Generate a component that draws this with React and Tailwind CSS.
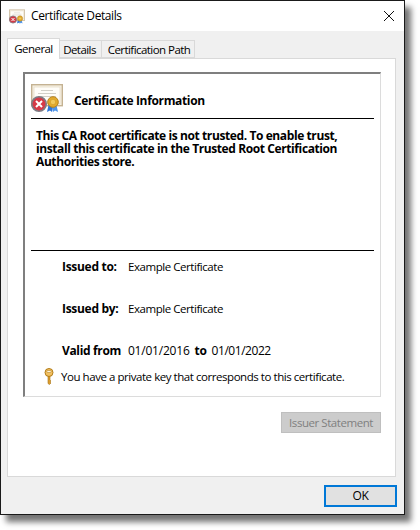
const CertIcon = ({ className }) => (
  <svg className={className} viewBox="0 0 32 28">
    <rect x="0.7" y="0.7" width="30.6" height="21" fill="#f7f1e3" stroke="#c4b292" strokeWidth="1.4" />
    <rect x="3" y="3" width="26" height="16.5" fill="#fffdf8" stroke="#e6dcc8" strokeWidth="0.8" />
    <path d="M10 6.5h12M7 9.5h18M7 12.5h18" stroke="#c8c4bb" strokeWidth="0.8" />
    <path d="M17.500 21l-1.500 7 3-1.500 2 1.500 1.500-7z" fill="#2f75d6" />
    <path d="M21 21l1 7 2-1.500 3 1.500-1.500-7z" fill="#4f95ea" />
    <circle cx="22" cy="18" r="5.300" fill="#e3aa2d" stroke="#b8841c" />
    <circle cx="22" cy="18" r="2.700" fill="#f2c95a" stroke="#c9941f" strokeWidth="0.5" />
    <circle cx="8" cy="20" r="7.200" fill="#d63a46" stroke="#7c7c84" strokeWidth="1.600" />
    <path d="M5 17l6 6M11 17l-6 6" stroke="#fff" strokeWidth="2" />
  </svg>
);

const KeyIcon = () => (
  <svg width="10" height="17" viewBox="0 0 10 17">
    <path d="M4 8v7.500l1.500 1 1.500-1.500-1-1 1-1-1-1 0-4z" fill="#dc9d2e" stroke="#a87415" strokeWidth="0.6" />
    <circle cx="5" cy="4.500" r="4" fill="#f2c060" stroke="#b27c18" />
    <rect x="2.800" y="2.500" width="4.400" height="2" rx="1" fill="#fff6dc" stroke="#a87415" strokeWidth="0.5" />
  </svg>
);

const Field = ({ label, value }) => (
  <div className="flex h-[42px] pl-[31px]">
    <span className="w-[56px] shrink-0 whitespace-nowrap font-bold tracking-[-0.3px]">{label}</span>
    <span className="ml-[10px] text-[11.5px] tracking-[-0.45px]">{value}</span>
  </div>
);

export default function App() {
  return (
    <div className="h-[530px] w-[420px] overflow-hidden bg-white font-['Open_Sans',sans-serif] text-[12px] leading-[16px] tracking-[-0.35px] text-black">
      <div className="flex h-[515px] w-[405px] flex-col border border-[#1a1a1a] bg-[#f0f0f0] shadow-[6px_7px_6px_rgba(0,0,0,0.55)]">
        <div className="flex h-[30px] items-center bg-white pl-[8px] pr-[10px]">
          <CertIcon className="h-[15px] w-[16px]" />
          <span className="ml-[6px] flex-1 tracking-[-0.4px]">Certificate Details</span>
          <svg width="10" height="10" viewBox="0 0 10 10">
            <path d="M0 0l10 10M10 0L0 10" stroke="#111" strokeWidth="1" />
          </svg>
        </div>

        <div className="mt-[7px] flex h-[20px] items-end pl-[6px] text-[11.5px] tracking-[-0.55px]">
          <div className="relative z-10 -mb-px flex h-[21px] w-[53px] items-center justify-center border border-b-0 border-[#d9d9d9] bg-white">General</div>
          <div className="flex h-[18px] w-[42px] items-center justify-center border-y border-r border-[#d9d9d9] pt-px pr-[2px]">Details</div>
          <div className="flex h-[18px] w-[93px] items-center justify-center border-y border-r border-[#d9d9d9] pt-px pl-[2px]">Certification Path</div>
        </div>

        <div className="ml-[6px] mr-[8px] flex h-[419px] flex-col border border-[#d9d9d9] bg-white pl-[15px] pr-[14px] pt-[13px]">
          <div className="flex h-[325px] flex-col border-y border-r border-l-2 border-t-2 border-[#dcdcdc] border-l-[#7f7f7f] border-t-[#7f7f7f] px-[6px]">
            <div className="flex h-[45px] items-start border-b border-black">
              <CertIcon className="mt-[10px] h-[28px] w-[32px]" />
              <span className="ml-[11px] mt-[19px] font-bold">Certificate Information</span>
            </div>
            <p className="ml-[5px] mt-[10px] h-[121px] pr-[20px] leading-[13px] font-bold tracking-[-0.4px]">
              This CA Root certificate is not trusted. To enable trust, install this certificate in the Trusted Root Certification Authorities store.
            </p>
            <div className="border-t border-black pt-[8px]">
              <Field label="Issued to:" value="Example Certificate" />
              <Field label="Issued by:" value="Example Certificate" />
              <div className="flex h-[25px] pl-[31px]">
                <span className="font-bold">Valid from</span>
                <span className="ml-[7px] tracking-[-0.2px]">01/01/2016</span>
                <span className="ml-[5px] font-bold">to</span>
                <span className="ml-[5px] tracking-[-0.45px]">01/01/2022</span>
              </div>
              <div className="flex items-center pl-[13px]">
                <KeyIcon />
                <span className="ml-[7px] text-[11.5px] tracking-[-0.45px]">You have a private key that corresponds to this certificate.</span>
              </div>
            </div>
          </div>
          <div className="mt-[15px] flex justify-end">
            <div className="flex h-[21px] w-[100px] items-center justify-center border border-[#bfbfbf] bg-[#cccccc] text-[11.5px] tracking-[-0.45px] text-[#808080]">Issuer Statement</div>
          </div>
        </div>

        <div className="mr-[7px] mt-[8px] flex justify-end">
          <div className="flex h-[22px] w-[73px] items-center justify-center border-2 border-[#0078d7] bg-[#e1e1e1]">OK</div>
        </div>
      </div>
    </div>
  );
}
